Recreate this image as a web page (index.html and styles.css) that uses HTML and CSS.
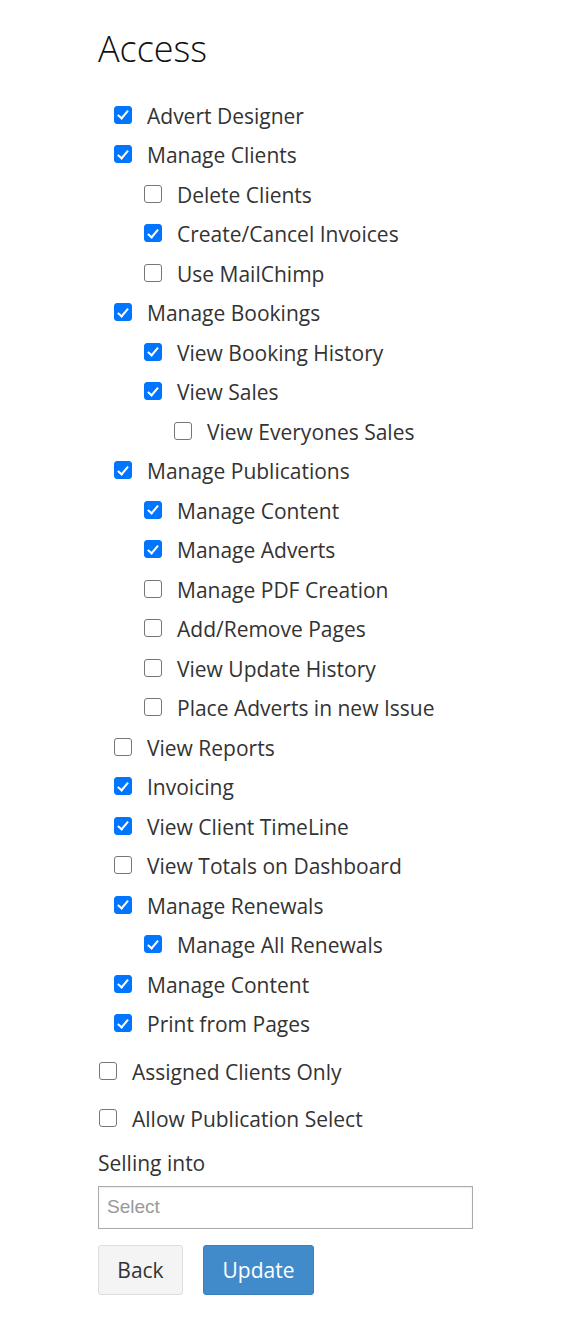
FILE: index.html
```html
<!DOCTYPE html>
<html>
<head>
<meta charset="utf-8">
<link rel="stylesheet" href="styles.css">
</head>
<body>
<div class="page">
  <h1 class="title">Access</h1>
  <ul class="perms">
    <li class="row l0"><span class="cb on"></span><span>Advert Designer</span></li>
    <li class="row l0"><span class="cb on"></span><span>Manage Clients</span></li>
    <li class="row l1"><span class="cb"></span><span>Delete Clients</span></li>
    <li class="row l1"><span class="cb on"></span><span>Create/Cancel Invoices</span></li>
    <li class="row l1"><span class="cb"></span><span>Use MailChimp</span></li>
    <li class="row l0"><span class="cb on"></span><span>Manage Bookings</span></li>
    <li class="row l1"><span class="cb on"></span><span>View Booking History</span></li>
    <li class="row l1"><span class="cb on"></span><span>View Sales</span></li>
    <li class="row l2"><span class="cb"></span><span>View Everyones Sales</span></li>
    <li class="row l0"><span class="cb on"></span><span>Manage Publications</span></li>
    <li class="row l1"><span class="cb on"></span><span>Manage Content</span></li>
    <li class="row l1"><span class="cb on"></span><span>Manage Adverts</span></li>
    <li class="row l1"><span class="cb"></span><span>Manage PDF Creation</span></li>
    <li class="row l1"><span class="cb"></span><span>Add/Remove Pages</span></li>
    <li class="row l1"><span class="cb"></span><span>View Update History</span></li>
    <li class="row l1"><span class="cb"></span><span>Place Adverts in new Issue</span></li>
    <li class="row l0"><span class="cb"></span><span>View Reports</span></li>
    <li class="row l0"><span class="cb on"></span><span>Invoicing</span></li>
    <li class="row l0"><span class="cb on"></span><span>View Client TimeLine</span></li>
    <li class="row l0"><span class="cb"></span><span>View Totals on Dashboard</span></li>
    <li class="row l0"><span class="cb on"></span><span>Manage Renewals</span></li>
    <li class="row l1"><span class="cb on"></span><span>Manage All Renewals</span></li>
    <li class="row l0"><span class="cb on"></span><span>Manage Content</span></li>
    <li class="row l0"><span class="cb on"></span><span>Print from Pages</span></li>
  </ul>
  <div class="opt"><span class="cb"></span><span>Assigned Clients Only</span></div>
  <div class="opt"><span class="cb"></span><span>Allow Publication Select</span></div>
  <label class="field-label">Selling into</label>
  <div class="select"><span class="placeholder">Select</span></div>
  <div class="actions">
    <button class="btn btn-default">Back</button>
    <button class="btn btn-primary">Update</button>
  </div>
</div>
</body>
</html>
```
FILE: styles.css
```css
html, body {
  margin: 0;
  padding: 0;
  background: #fff;
}
body {
  font-family: "Open Sans", "Liberation Sans", sans-serif;
  color: #333;
  font-size: 21px;
}
.page {
  padding-left: 98px;
  padding-top: 27px;
  width: 375px;
}
.title {
  margin: 0;
  font-size: 36px;
  font-weight: 300;
  line-height: 43px;
  color: #111;
}
.perms {
  list-style: none;
  margin: 26.5px 0 0 0;
  padding: 0;
}
.row {
  display: flex;
  align-items: center;
  height: 39.5px;
  line-height: 39.5px;
  white-space: nowrap;
}
.row.l0 { padding-left: 16px; }
.row.l1 { padding-left: 46px; }
.row.l2 { padding-left: 76px; }
.cb {
  flex: none;
  box-sizing: border-box;
  width: 18px;
  height: 18px;
  margin-right: 15px;
  margin-top: -3px;
  border: 1px solid #767676;
  border-radius: 3px;
  background: #fff;
  position: relative;
}
.cb.on {
  background: #0075ff;
  border-color: #0075ff;
}
.cb.on::after {
  content: "";
  position: absolute;
  left: 5px;
  top: 1.5px;
  width: 4px;
  height: 9px;
  border: solid #fff;
  border-width: 0 2.5px 2.5px 0;
  transform: rotate(40deg);
}
.opt {
  display: flex;
  align-items: center;
  height: 47px;
  line-height: 47px;
  padding-left: 1px;
  white-space: nowrap;
}
.perms + .opt { margin-top: 4px; }
.field-label {
  display: block;
  margin-top: 6px;
  line-height: 28px;
}
.select {
  box-sizing: border-box;
  margin-top: 9px;
  width: 375px;
  height: 43px;
  border: 1px solid #aaa;
  box-shadow: inset 0 1px 2px rgba(0,0,0,0.08);
  display: flex;
  align-items: center;
  padding-left: 8px;
}
.placeholder {
  font-family: "Liberation Sans", Arial, sans-serif;
  font-size: 19px;
  color: #999;
}
.actions {
  display: flex;
  gap: 20px;
  margin-top: 16px;
}
.btn {
  box-sizing: border-box;
  height: 50px;
  font-family: "Open Sans", "Liberation Sans", sans-serif;
  font-size: 21px;
  border-radius: 3px;
  padding: 0;
  cursor: pointer;
}
.btn-default {
  width: 85px;
  background: #f4f4f4;
  border: 1px solid #ddd;
  color: #333;
}
.btn-primary {
  width: 111px;
  background: #428bca;
  border: 1px solid #3b7fbd;
  color: #fff;
}
```
